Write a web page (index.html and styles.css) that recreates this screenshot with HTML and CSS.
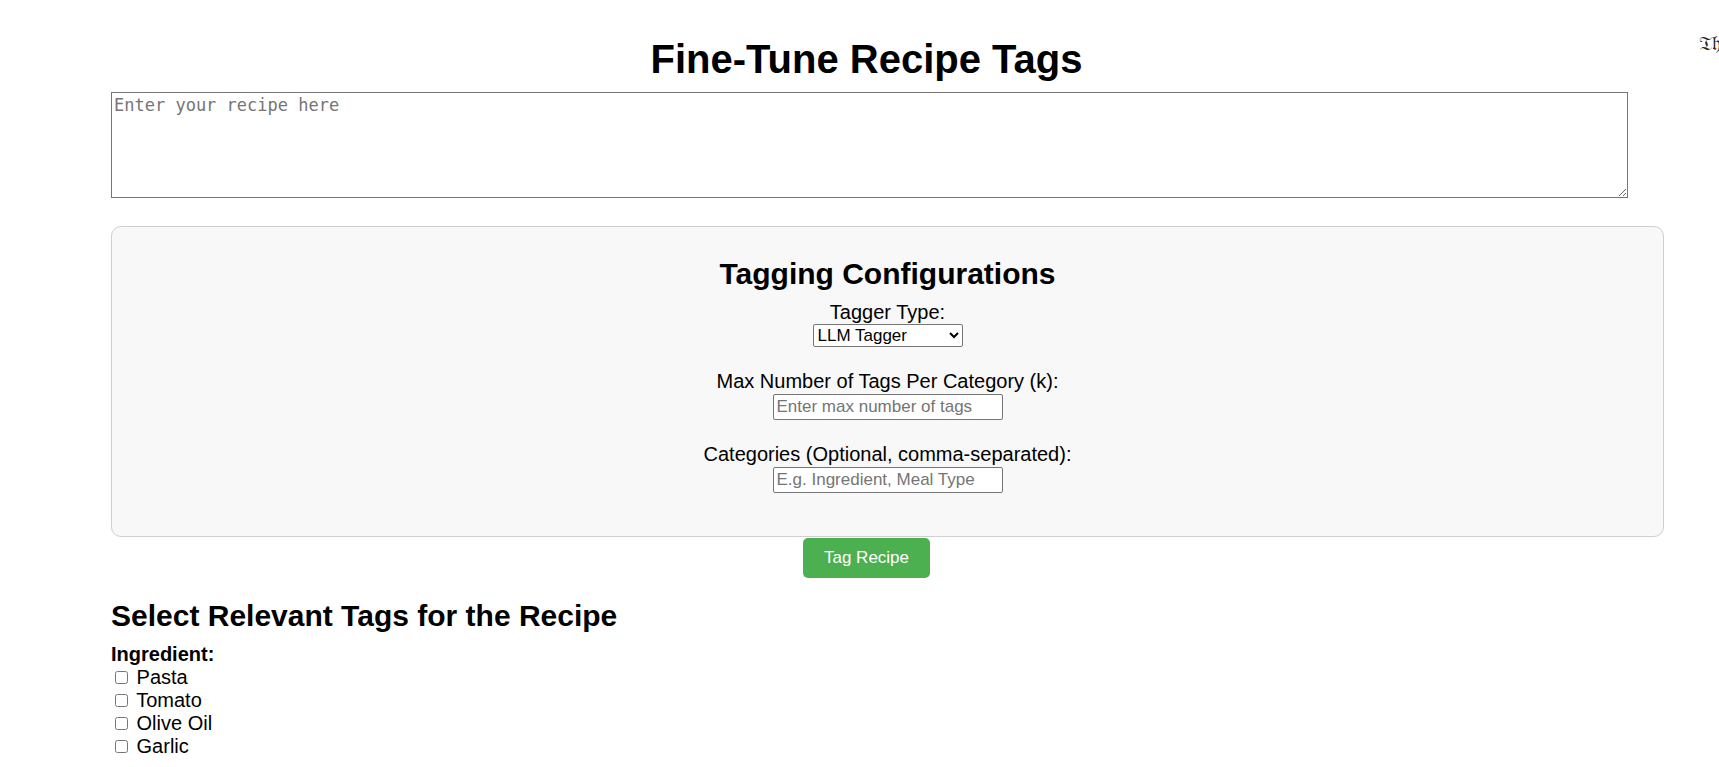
FILE: index.html
```html
<!DOCTYPE html>
<html lang="en">
<head>
<meta charset="utf-8">
<title>Fine-Tune Recipe Tags</title>
<link rel="stylesheet" href="styles.css">
</head>
<body>
<div class="corner-note">𝔗𝔥𝔢 𝔯𝔢𝔠𝔦𝔭𝔢</div>
<div class="container">
  <h1>Fine-Tune Recipe Tags</h1>
  <textarea class="recipe-input" placeholder="Enter your recipe here"></textarea>

  <div class="config-panel">
    <h2>Tagging Configurations</h2>
    <div class="form-group">
      <label for="tagger">Tagger Type:</label>
      <select id="tagger" class="select-control">
        <option>LLM Tagger</option>
        <option>Embedding Tagger</option>
      </select>
    </div>
    <div class="form-group">
      <label for="maxk">Max Number of Tags Per Category (k):</label>
      <input id="maxk" class="text-control" type="number" placeholder="Enter max number of tags">
    </div>
    <div class="form-group">
      <label for="cats">Categories (Optional, comma-separated):</label>
      <input id="cats" class="text-control" type="text" placeholder="E.g. Ingredient, Meal Type">
    </div>
  </div>

  <button class="tag-button" type="button">Tag Recipe</button>

  <h2 class="section-title">Select Relevant Tags for the Recipe</h2>
  <div class="tag-category">
    <div class="category-name">Ingredient:</div>
    <div class="tag-item"><input type="checkbox"> Pasta</div>
    <div class="tag-item"><input type="checkbox"> Tomato</div>
    <div class="tag-item"><input type="checkbox"> Olive Oil</div>
    <div class="tag-item"><input type="checkbox"> Garlic</div>
  </div>
</div>
</body>
</html>
```

FILE: styles.css
```css
html, body {
  overflow: hidden;
}

body {
  margin: 8px;
  font-family: "Liberation Sans", Arial, sans-serif;
  font-size: 20px;
  color: #000;
  background: #fff;
}

.corner-note {
  position: absolute;
  top: 31px;
  left: 1699px;
  font-size: 20px;
  white-space: nowrap;
  font-family: "DejaVu Serif", "DejaVu Sans", serif;
  color: #222;
}

.container {
  width: 1511px;
  margin-left: 103px;
}

h1 {
  font-size: 40px;
  font-weight: bold;
  text-align: center;
  margin: 29px 0 10px;
}

.recipe-input {
  display: block;
  width: 100%;
  height: 100px;
  padding: 2px;
  margin: 0 0 28px;
  border: 1px solid #767676;
  font-family: "DejaVu Sans Mono", monospace;
  font-size: 17px;
  resize: vertical;
}

.recipe-input::placeholder {
  color: #757575;
}

.config-panel {
  width: 100%;
  background: #f8f8f8;
  border: 1px solid #cfcfcf;
  border-radius: 10px;
  padding: 20px;
  text-align: center;
}

.config-panel h2 {
  font-size: 30px;
  margin: 10px 0;
}

.form-group {
  margin-bottom: 23px;
}

.form-group label {
  display: block;
}

.select-control {
  display: block;
  margin: 0 auto;
  width: 150px;
  height: 23px;
  font-family: "Liberation Sans", Arial, sans-serif;
  font-size: 17px;
  border: 1px solid #767676;
  border-radius: 2px;
  background: #fff;
  color: #000;
}

.text-control {
  display: block;
  box-sizing: border-box;
  margin: 1px auto 0;
  width: 230px;
  height: 26px;
  padding: 1px 3px;
  font-family: "Liberation Sans", Arial, sans-serif;
  font-size: 17px;
  border: 1px solid #767676;
  border-radius: 2px;
  background: #fff;
  -moz-appearance: textfield;
}

.text-control::-webkit-outer-spin-button,
.text-control::-webkit-inner-spin-button {
  -webkit-appearance: none;
  margin: 0;
}

.text-control::placeholder {
  color: #757575;
}

.tag-button {
  display: block;
  margin: 1px auto 0;
  padding: 10px 21px;
  border: none;
  border-radius: 5px;
  background: #4caf50;
  color: #fff;
  font-family: "Liberation Sans", Arial, sans-serif;
  font-size: 17px;
}

.section-title {
  font-size: 30px;
  margin: 21px 0 10px;
}

.category-name {
  font-weight: bold;
}

.tag-item input {
  margin: 4px 3px 2px 4px;
}
```
